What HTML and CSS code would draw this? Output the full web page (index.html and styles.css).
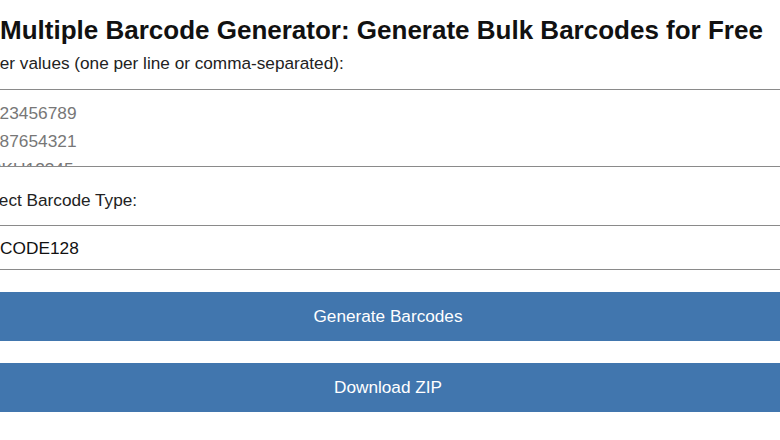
FILE: index.html
```html
<!DOCTYPE html>
<html lang="en">
<head>
<meta charset="utf-8">
<title>Multiple Barcode Generator</title>
<link rel="stylesheet" href="styles.css">
</head>
<body>
<main class="tool">
  <h1 class="title">Multiple Barcode Generator: Generate Bulk Barcodes for Free</h1>
  <label class="label label-first" for="values">Enter values (one per line or comma-separated):</label>
  <textarea id="values" class="values" placeholder="123456789&#10;987654321&#10;SKU12345&#10;ABC-0001"></textarea>
  <label class="label label-second" for="type">Select Barcode Type:</label>
  <select id="type" class="type">
    <option>CODE128</option>
    <option>EAN13</option>
    <option>UPC</option>
    <option>CODE39</option>
  </select>
  <button class="btn btn-generate" type="button">Generate Barcodes</button>
  <button class="btn btn-download" type="button">Download ZIP</button>
</main>
</body>
</html>
```

FILE: styles.css
```css
html, body {
  margin: 0;
  padding: 0;
  background: #ffffff;
  overflow: hidden;
}

body {
  font-family: "Liberation Sans", Arial, sans-serif;
  color: #222222;
}

.tool {
  display: flex;
  flex-direction: column;
  width: 828px;
  margin-left: -26px;
}

.title {
  margin: 15px 0 0 0;
  padding-left: 26px;
  font-size: 26px;
  line-height: 30px;
  font-weight: bold;
  color: #111111;
  white-space: nowrap;
}

.label {
  display: block;
  font-size: 17.2px;
  line-height: 20px;
  color: #222222;
}

.label-first {
  margin-top: 8px;
}

.label-second {
  margin-top: 23px;
}

.values {
  box-sizing: border-box;
  display: block;
  width: 100%;
  height: 78px;
  margin-top: 16px;
  padding: 9px 15px 8px 15px;
  border: 1px solid #8a8a8a;
  border-radius: 0;
  font-family: "Liberation Sans", Arial, sans-serif;
  font-size: 17.3px;
  line-height: 28px;
  color: #222222;
  resize: none;
  outline: none;
}

.values::placeholder {
  color: #777777;
}

.type {
  box-sizing: border-box;
  display: block;
  width: 100%;
  height: 45px;
  margin-top: 15px;
  padding: 0 25px;
  border: 1px solid #8a8a8a;
  border-radius: 0;
  background: #ffffff;
  font-family: "Liberation Sans", Arial, sans-serif;
  font-size: 17.3px;
  color: #111111;
  appearance: none;
  -webkit-appearance: none;
  outline: none;
}

.btn {
  box-sizing: border-box;
  display: block;
  width: 100%;
  height: 49px;
  border: none;
  border-radius: 0;
  background: #4176ae;
  color: #ffffff;
  font-family: "Liberation Sans", Arial, sans-serif;
  font-size: 17.2px;
  cursor: pointer;
}

.btn-generate {
  margin-top: 22px;
}

.btn-download {
  margin-top: 22px;
}
```
